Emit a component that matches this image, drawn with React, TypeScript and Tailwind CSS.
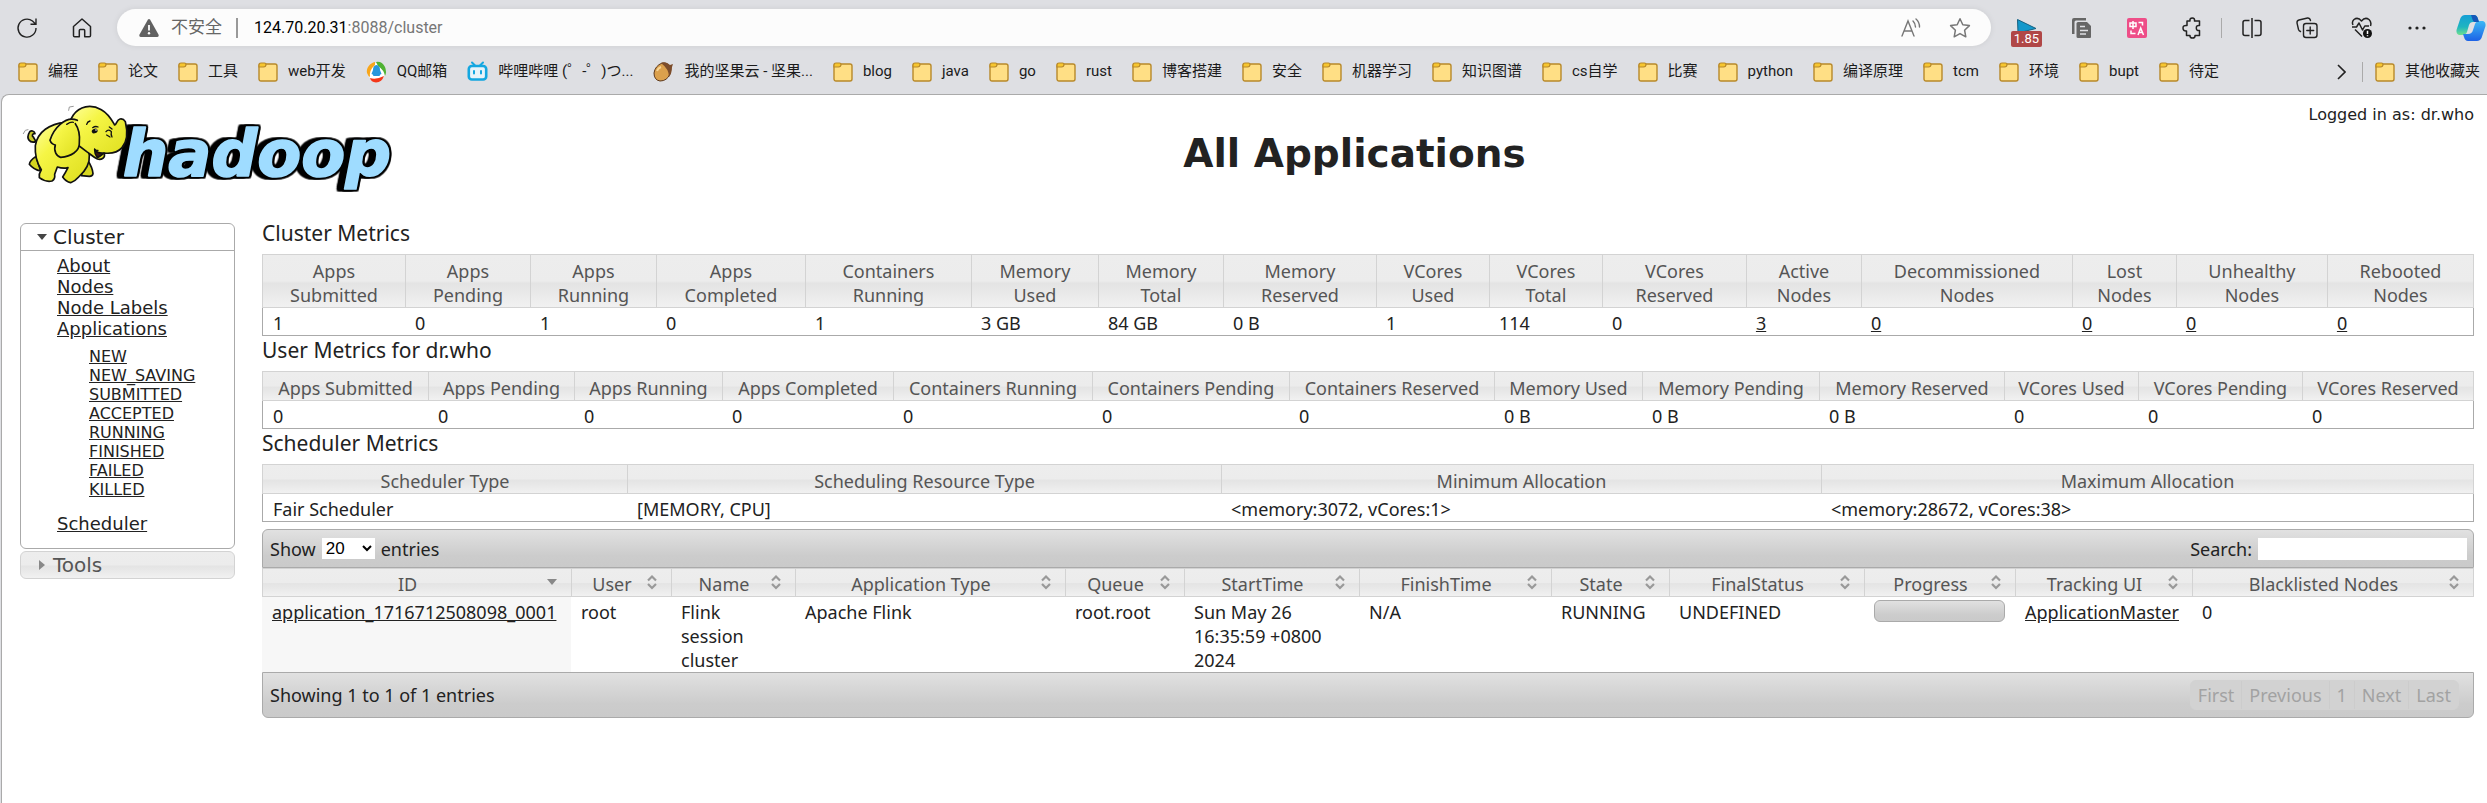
import React from "react";

const uiFont = "font-['Roboto','Noto_Sans_CJK_SC',sans-serif]";
const tableFont = "font-['Noto_Sans','Open_Sans','Noto_Sans_CJK_SC',sans-serif]";
const pageFont = "font-['DejaVu_Sans',sans-serif]";
const headerFill =
  "bg-[linear-gradient(to_bottom,#ededed_0%,#ececec_50%,#e4e4e4_54%,#e8e8e8_70%,#f1f1f1_100%)]";
const barFill = "bg-[linear-gradient(to_bottom,#e1e1e1_0%,#cccccc_70%,#cacaca_100%)]";

/* ---------- browser icons ---------- */

function FolderIcon() {
  return (
    <svg width="20" height="20" viewBox="0 0 20 20" className="shrink-0">
      <rect x="1" y="2" width="18" height="17" rx="2" fill="#ffdf85" stroke="#b8892a" strokeWidth="1.4" />
      <path d="M1 5V3Q1 1 3 1H6.500Q8 1 8 2.500Q8 5 5.500 5Z" fill="#f7c62f" stroke="#b8892a" strokeWidth="1.200" />
    </svg>
  );
}

function QQMailIcon() {
  return (
    <svg width="21" height="22" viewBox="0 0 21 22" className="shrink-0">
      <circle cx="10.500" cy="11" r="9" fill="#fff" />
      <path d="M9 1C4 2 0 7 1 12Q2 15 4 16Q3 9 9 4Z" fill="#f8a61b" />
      <path d="M10 1Q16 0 19 6Q21 11 19 15Q18 9 12 5Z" fill="#4fb233" />
      <path d="M4 17Q10 19 18 15Q16 21 10 21.500Q5 21 4 17Z" fill="#f4381a" />
      <path d="M10.500 4Q14 4.500 14 9L15.500 13Q14 13 13.500 15H7.500Q7 13 5.500 13L7 9Q7 4.500 10.500 4Z" fill="#2797dd" />
    </svg>
  );
}

function BilibiliIcon() {
  return (
    <svg width="21" height="21" viewBox="0 0 21 21" className="shrink-0" fill="none" stroke="#14a7e0">
      <path d="M5 1.500L8 4.500M16 1.500L13 4.500" strokeWidth="2" strokeLinecap="round" />
      <rect x="1.800" y="5" width="17.400" height="13.500" rx="3" strokeWidth="2.600" fill="#e8f4fa" />
      <path d="M7 10V12.500M14 10V12.500" strokeWidth="2" strokeLinecap="round" />
    </svg>
  );
}

function NutIcon() {
  return (
    <svg width="21" height="21" viewBox="0 0 21 21" className="shrink-0">
      <path d="M9 2Q2 5 1 12Q1 19 7 20Q14 20 17 13Q18 8 17 5Q13 1 9 2Z" fill="#dba04c" stroke="#5c381c" strokeWidth="1" />
      <path d="M8 2Q13 0 17 4L20 3L19 6Q19 12 16 16Q16 8 8 2Z" fill="#7c4c2a" />
      <path d="M4 10Q5 7 8 6" stroke="#f7d596" strokeWidth="2" fill="none" />
    </svg>
  );
}

function ReloadIcon() {
  return (
    <svg width="22" height="22" viewBox="0 0 22 22" fill="none" stroke="#222" strokeWidth="1.400">
      <path d="M20 11A9 9 0 1 1 16.500 4L19.500 7M20 1.500V7.200H14.500" />
    </svg>
  );
}

function HomeIcon() {
  return (
    <svg width="20" height="20" viewBox="0 0 20 20" fill="none" stroke="#222" strokeWidth="1.500" strokeLinejoin="round">
      <path d="M1.500 8.500L10 1L18.500 8.500V17.500Q18.500 18.800 17.300 18.800H12.700V12.500Q12.700 11.500 11.700 11.500H8.300Q7.300 11.500 7.300 12.500V18.800H2.700Q1.500 18.800 1.500 17.500Z" />
    </svg>
  );
}

function WarningIcon() {
  return (
    <svg width="20" height="18" viewBox="0 0 20 18">
      <path d="M8.800 .8Q10 -.6 11.200 .8L19.600 15.800Q20 18 18 18H2Q0 18 .4 15.800Z" fill="#616161" />
      <path d="M10 6V11.500" stroke="#fff" strokeWidth="1.800" />
      <circle cx="10" cy="14.300" r="1.200" fill="#fff" />
    </svg>
  );
}

function ReadAloudIcon() {
  return (
    <svg width="20" height="20" viewBox="0 0 20 20" fill="none" stroke="#777" strokeWidth="1.400" strokeLinecap="round">
      <path d="M1 18L7 3L13 18M3 13H11M12 3Q14.500 5.500 14.500 9M15 1Q18.500 4 18.500 9" />
    </svg>
  );
}

function StarIcon() {
  return (
    <svg width="22" height="22" viewBox="0 0 22 22" fill="none" stroke="#777" strokeWidth="1.500" strokeLinejoin="round">
      <path d="M11 1.800L13.800 7.800L20.400 8.600L15.600 13.200L16.800 19.800L11 16.600L5.200 19.800L6.400 13.200L1.600 8.600L8.200 7.800Z" />
    </svg>
  );
}

function FlagIcon() {
  return (
    <span className="relative block h-9 w-[31px]">
      <svg width="20" height="15" viewBox="0 0 20 15" className="absolute top-[9px] left-[6px]">
        <path d="M.5 .5L19 9.500L1 14Z" fill="#1398cb" stroke="#166080" />
      </svg>
      <span className="absolute top-[21px] left-0 flex h-4 w-[31px] items-center justify-center rounded-xs bg-[#b04747] text-[13px] leading-none text-white">
        1.85
      </span>
    </span>
  );
}

function DocsIcon() {
  return (
    <svg width="20" height="20" viewBox="0 0 20 20">
      <path d="M0 16V2Q0 0 2 0H14V2.500H4Q2.500 2.500 2.500 4V16Z" fill="#666" />
      <path d="M6 4H15L19 8V19Q19 20 18 20H6Q4.500 20 4.500 18.500V5.500Q4.500 4 6 4Z" fill="#666" />
      <path d="M8 8.500H13M8 12.500H16M8 16H14" stroke="#dedfe3" strokeWidth="1.500" />
    </svg>
  );
}

function TranslateIcon() {
  return (
    <svg width="20" height="20" viewBox="0 0 20 20" fill="none" stroke="#fff" strokeWidth="1.500">
      <rect width="20" height="20" rx="2" fill="#ee4e88" stroke="none" />
      <path d="M3 5H9V8.500H3ZM6 3V11M11.500 4.500H15.500V7.500M4 12.500V15.500H8.500M11 17L13.700 10L16.500 17M12 14.500H15.500" />
    </svg>
  );
}

function PuzzleIcon() {
  return (
    <svg width="20" height="22" viewBox="0 0 20 22" fill="none" stroke="#222" strokeWidth="1.500" strokeLinejoin="round">
      <path d="M5 4H8Q7.500 1 10.300 1Q13 1 12.500 4H17.500V8.500Q14.300 8 14.300 11Q14.300 14 17.500 13.500V18.500H13Q13.300 21 10.500 21Q7.800 21 8 18.500H4.500V14Q1 14.300 1 11Q1 8 5 8.500Z" />
    </svg>
  );
}

function SplitIcon() {
  return (
    <svg width="20" height="20" viewBox="0 0 20 20" fill="none" stroke="#222" strokeWidth="1.500">
      <path d="M7.500 2.500H3Q1 2.500 1 4.500V15.500Q1 17.500 3 17.500H7.500M12.500 2.500H17Q19 2.500 19 4.500V15.500Q19 17.500 17 17.500H12.500M10 0V20" />
    </svg>
  );
}

function CollectionsIcon() {
  return (
    <svg width="22" height="22" viewBox="0 0 22 22" fill="none" stroke="#222" strokeWidth="1.400" strokeLinecap="round">
      <rect x="7.500" y="6.500" width="13.500" height="14" rx="2.500" />
      <path d="M14.200 10V17M10.800 13.500H17.700M4.500 14.500Q3 14 2.500 12.500L1 6Q.8 3.500 3 3L11.500 1Q13.800 .8 14.500 3.500" />
    </svg>
  );
}

function HeartIcon() {
  return (
    <svg width="22" height="22" viewBox="0 0 22 22" fill="none" stroke="#222" strokeWidth="1.500" strokeLinejoin="round">
      <path d="M2 8Q.5 5 3 2.500Q7 -.3 10.500 4Q14 -.3 18 2.500Q20.800 5 19.500 9M1 10H5.500L8 6L11.500 13L13.800 9H18M4 12.500L11 19.500" />
      <circle cx="16.500" cy="16.500" r="4.500" fill="#111" stroke="none" />
      <path d="M16.500 13.800V17M16.500 18.300V19.300" stroke="#fff" />
    </svg>
  );
}

function DotsIcon() {
  return (
    <svg width="18" height="4" viewBox="0 0 18 4" fill="#222">
      <circle cx="2" cy="2" r="1.600" />
      <circle cx="9" cy="2" r="1.600" />
      <circle cx="16" cy="2" r="1.600" />
    </svg>
  );
}

function CopilotIcon() {
  return (
    <svg width="30" height="28" viewBox="0 0 30 28">
      <defs>
        <linearGradient id="cpA" x1="0" y1="0" x2="0" y2="1">
          <stop offset="0" stopColor="#159fd6" />
          <stop offset=".6" stopColor="#1fb5c0" />
          <stop offset="1" stopColor="#6fe08e" />
        </linearGradient>
        <linearGradient id="cpB" x1="0" y1="0" x2="0" y2="1">
          <stop offset="0" stopColor="#3bb8f5" />
          <stop offset="1" stopColor="#1d62e6" />
        </linearGradient>
      </defs>
      <path d="M9 1H18Q21 1 22 5L23 8H17Q14 8 13 11L11 18Q10 21 6 21H3Q0 20 .5 16L4.500 4Q6 1 9 1Z" fill="url(#cpA)" />
      <path d="M21 27H12Q9 27 8 23L7 20H12Q16 20 17 16L19 10Q20 7 24 7H27Q30 8 29.500 12L25.500 24Q24 27 21 27Z" fill="url(#cpB)" />
      <path d="M15 1H18Q21 1 22 5L23 8H19Q17 8 16 4Z" fill="#1557b8" />
    </svg>
  );
}

const bookmarks: { label: string; icon?: React.ReactNode }[] = [
  { label: "编程" },
  { label: "论文" },
  { label: "工具" },
  { label: "web开发" },
  { label: "QQ邮箱", icon: <QQMailIcon /> },
  { label: "哔哩哔哩 (゜-゜)つ...", icon: <BilibiliIcon /> },
  { label: "我的坚果云 - 坚果...", icon: <NutIcon /> },
  { label: "blog" },
  { label: "java" },
  { label: "go" },
  { label: "rust" },
  { label: "博客搭建" },
  { label: "安全" },
  { label: "机器学习" },
  { label: "知识图谱" },
  { label: "cs自学" },
  { label: "比赛" },
  { label: "python" },
  { label: "编译原理" },
  { label: "tcm" },
  { label: "环境" },
  { label: "bupt" },
  { label: "待定" },
];

function Bookmark({ label, icon }: { label: string; icon?: React.ReactNode }) {
  return (
    <a href="#" className="flex shrink-0 items-center gap-2.5 whitespace-nowrap">
      {icon ?? <FolderIcon />}
      <span>{label}</span>
    </a>
  );
}

function ToolButton({ label, children }: { label: string; children: React.ReactNode }) {
  return (
    <button aria-label={label} className="flex w-[55px] shrink-0 items-center justify-center">
      {children}
    </button>
  );
}

function BrowserChrome() {
  return (
    <div className={`bg-[#dedfe3] text-[15px] text-[#1b1b1b] ${uiFont}`}>
      <div className="flex h-[55px] items-center">
        <button aria-label="Reload" className="flex w-[54px] shrink-0 justify-center">
          <ReloadIcon />
        </button>
        <button aria-label="Home" className="flex w-[55px] shrink-0 justify-center">
          <HomeIcon />
        </button>
        <div className="ml-2 flex h-[37px] min-w-0 flex-1 items-center rounded-full bg-[#fcfcfc] pr-5 pl-[22px] shadow-[0_0_6px_rgba(0,0,0,0.08)]">
          <WarningIcon />
          <span className="ml-3 text-[17px] text-[#666]">不安全</span>
          <span className="ml-3.5 h-5 w-0.5 bg-[#999]" />
          <span className="ml-4 flex-1 text-base text-[#767676]">
            <span className="text-black">124.70.20.31</span>:8088/cluster
          </span>
          <button aria-label="Read aloud" className="mr-7">
            <ReadAloudIcon />
          </button>
          <button aria-label="Add to favorites">
            <StarIcon />
          </button>
        </div>
        <div className="ml-2 flex shrink-0 items-center">
          <ToolButton label="Speed"><FlagIcon /></ToolButton>
          <ToolButton label="Documents"><DocsIcon /></ToolButton>
          <ToolButton label="Translate"><TranslateIcon /></ToolButton>
          <ToolButton label="Extensions"><PuzzleIcon /></ToolButton>
          <span className="mx-0.5 h-5 w-px bg-[#aaa]" />
          <ToolButton label="Split screen"><SplitIcon /></ToolButton>
          <ToolButton label="Collections"><CollectionsIcon /></ToolButton>
          <ToolButton label="Browser essentials"><HeartIcon /></ToolButton>
          <ToolButton label="More"><DotsIcon /></ToolButton>
          <button aria-label="Copilot" className="-mr-px w-[44px] shrink-0 pl-3">
            <CopilotIcon />
          </button>
        </div>
      </div>
      <div className="flex h-[39px] items-center pb-1.5 pl-[18px]">
        <nav className="flex min-w-0 flex-1 items-center gap-5 overflow-hidden">
          {bookmarks.map((b) => (
            <Bookmark key={b.label} {...b} />
          ))}
        </nav>
        <button aria-label="More bookmarks" className="mr-4 shrink-0">
          <svg width="9" height="16" viewBox="0 0 9 16" fill="none" stroke="#222" strokeWidth="1.600">
            <path d="M1 1L8 8L1 15" />
          </svg>
        </button>
        <span className="mr-3 h-5 w-px shrink-0 bg-[#aaa]" />
        <div className="shrink-0 pr-[7px]">
          <Bookmark label="其他收藏夹" />
        </div>
      </div>
    </div>
  );
}

/* ---------- page header ---------- */

function HadoopLogo() {
  return (
    <svg width="377" height="93" viewBox="60 40 1131 279" className="max-w-none" role="img" aria-label="hadoop">
      <defs>
        <linearGradient id="skin" x1="0" y1="0" x2="1" y2="1">
          <stop offset="0" stopColor="#ffffa0" />
          <stop offset=".35" stopColor="#f5f545" />
          <stop offset="1" stopColor="#dddd1c" />
        </linearGradient>
      </defs>
      <text
        x="368"
        y="259"
        fontSize="192"
        fontWeight="700"
        fontStyle="italic"
        fill="#9fdcff"
        stroke="#9fdcff"
        strokeWidth="5"
        strokeLinejoin="round"
        className={`${pageFont} [filter:drop-shadow(5px_0_0_#000)_drop-shadow(-5px_0_0_#000)_drop-shadow(0_5px_0_#000)_drop-shadow(0_-5px_0_#000)_drop-shadow(-16px_0_0_#000)]`}
      >
        hadoop
      </text>
      <g stroke="#111" strokeWidth="5" strokeLinejoin="round" strokeLinecap="round" fill="url(#skin)">
        <path d="M108 156C88 162 78 146 88 128C92 120 104 124 105 132C98 130 94 138 100 142Z" fill="#c9c92a" />
        <path d="M108 200C96 208 88 218 88 224C96 234 108 242 122 244Z" fill="#d6d620" />
        <path d="M262 210C270 222 278 236 279 252Q278 260 268 260L244 258Q250 240 252 222Z" fill="#d6d620" />
        <path d="M196 98C150 102 112 126 106 168C104 200 112 222 124 240Q116 252 118 264Q136 278 156 274Q166 268 164 254L172 232Q190 238 204 234Q196 250 188 262Q198 276 212 279Q226 274 236 262C256 244 270 222 268 196L250 130Z" />
        <path d="M220 76C238 50 272 42 304 60C326 72 336 92 344 106C350 104 350 90 360 88Q370 86 376 96C384 130 380 158 366 174C352 190 330 192 312 190C318 204 304 212 292 208C282 204 272 194 260 186L226 160L206 100Z" />
        <path d="M284 180Q292 192 312 190Q300 200 292 204Q284 194 284 180Z" fill="#3a1712" />
        <path d="M232 92C196 76 160 118 150 152Q154 164 166 166C160 184 170 200 182 203C212 200 240 186 238 158C240 134 236 116 226 102" />
      </g>
      <g fill="none" stroke="#111" strokeWidth="4" strokeLinecap="round">
        <path d="M260 104Q262 96 270 94M278 114Q286 108 294 112M318 126Q324 118 332 124M320 136L330 142M334 126Q332 136 336 142M328 112L336 118M284 178Q286 184 294 182M200 104Q212 96 220 98" />
        <path d="M206 62L208 52L220 50M70 132L76 122L84 120" stroke="#999" strokeWidth="3" />
      </g>
      <ellipse cx="284" cy="124" rx="9" ry="7" fill="#111" transform="rotate(-25 284 124)" />
      <circle cx="288" cy="121" r="2.500" fill="#fff" />
    </svg>
  );
}

/* ---------- sidebar ---------- */

const appStates = ["NEW", "NEW_SAVING", "SUBMITTED", "ACCEPTED", "RUNNING", "FINISHED", "FAILED", "KILLED"];

function Sidebar() {
  return (
    <aside className="w-[215px] shrink-0">
      <div className="rounded-md border border-[#aaa] bg-white pb-3.5">
        <button className="flex h-[27px] w-full items-center border-b border-[#aaa] pl-4 text-xl leading-none text-[#212121]">
          <svg width="10" height="6" viewBox="0 0 10 6" className="mr-[6px]">
            <path d="M0 0H10L5 6Z" fill="#454545" />
          </svg>
          Cluster
        </button>
        <ul className="pt-1 pl-9 text-lg leading-[21px] text-[#222]">
          {["About", "Nodes", "Node Labels", "Applications"].map((t) => (
            <li key={t}>
              <a href="#" className="underline">{t}</a>
            </li>
          ))}
          <li>
            <ul className="py-2 pl-8 text-base leading-[19px]">
              {appStates.map((t) => (
                <li key={t}>
                  <a href="#" className="underline">{t}</a>
                </li>
              ))}
            </ul>
          </li>
          <li className="pt-1.5">
            <a href="#" className="underline">Scheduler</a>
          </li>
        </ul>
      </div>
      <button
        className={`mt-0.5 flex h-7 w-full items-center rounded-md border border-[#d3d3d3] pl-[18px] text-xl leading-none text-[#555] ${headerFill}`}
      >
        <svg width="6" height="10" viewBox="0 0 6 10" className="mr-2">
          <path d="M0 0V10L6 5Z" fill="#888" />
        </svg>
        Tools
      </button>
    </aside>
  );
}

/* ---------- tables ---------- */

type Column = { head: string; width: number; value: React.ReactNode };

function link(text: string) {
  return <a href="#" className="underline">{text}</a>;
}

const clusterMetrics: Column[] = [
  { head: "Apps Submitted", width: 143, value: "1" },
  { head: "Apps Pending", width: 125, value: "0" },
  { head: "Apps Running", width: 126, value: "1" },
  { head: "Apps Completed", width: 149, value: "0" },
  { head: "Containers Running", width: 166, value: "1" },
  { head: "Memory Used", width: 127, value: "3 GB" },
  { head: "Memory Total", width: 125, value: "84 GB" },
  { head: "Memory Reserved", width: 153, value: "0 B" },
  { head: "VCores Used", width: 113, value: "1" },
  { head: "VCores Total", width: 113, value: "114" },
  { head: "VCores Reserved", width: 144, value: "0" },
  { head: "Active Nodes", width: 115, value: link("3") },
  { head: "Decommissioned Nodes", width: 211, value: link("0") },
  { head: "Lost Nodes", width: 104, value: link("0") },
  { head: "Unhealthy Nodes", width: 151, value: link("0") },
  { head: "Rebooted Nodes", width: 147, value: link("0") },
];

const userMetrics: Column[] = [
  { head: "Apps Submitted", width: 166, value: "0" },
  { head: "Apps Pending", width: 146, value: "0" },
  { head: "Apps Running", width: 148, value: "0" },
  { head: "Apps Completed", width: 171, value: "0" },
  { head: "Containers Running", width: 199, value: "0" },
  { head: "Containers Pending", width: 197, value: "0" },
  { head: "Containers Reserved", width: 205, value: "0" },
  { head: "Memory Used", width: 148, value: "0 B" },
  { head: "Memory Pending", width: 177, value: "0 B" },
  { head: "Memory Reserved", width: 185, value: "0 B" },
  { head: "VCores Used", width: 134, value: "0" },
  { head: "VCores Pending", width: 164, value: "0" },
  { head: "VCores Reserved", width: 172, value: "0" },
];

const schedulerMetrics: Column[] = [
  { head: "Scheduler Type", width: 365, value: "Fair Scheduler" },
  { head: "Scheduling Resource Type", width: 594, value: "[MEMORY, CPU]" },
  { head: "Minimum Allocation", width: 600, value: "<memory:3072, vCores:1>" },
  { head: "Maximum Allocation", width: 653, value: "<memory:28672, vCores:38>" },
];

const applications: Column[] = [
  { head: "ID", width: 309, value: link("application_1716712508098_0001") },
  { head: "User", width: 100, value: "root" },
  { head: "Name", width: 124, value: "Flink session cluster" },
  { head: "Application Type", width: 270, value: "Apache Flink" },
  { head: "Queue", width: 119, value: "root.root" },
  { head: "StartTime", width: 175, value: "Sun May 26 16:35:59 +0800 2024" },
  { head: "FinishTime", width: 192, value: "N/A" },
  { head: "State", width: 118, value: "RUNNING" },
  { head: "FinalStatus", width: 195, value: "UNDEFINED" },
  {
    head: "Progress",
    width: 151,
    value: <div className={`h-[22px] rounded-md border border-[#aaa] ${barFill}`} />,
  },
  { head: "Tracking UI", width: 177, value: link("ApplicationMaster") },
  { head: "Blacklisted Nodes", width: 282, value: "0" },
];

function Cols({ columns }: { columns: Column[] }) {
  const total = columns.reduce((sum, c) => sum + c.width, 0);
  return (
    <colgroup>
      {columns.map((c) => (
        <col key={c.head} style={{ width: `${(c.width / total) * 100}%` }} />
      ))}
    </colgroup>
  );
}

function MetricsTable({ title, columns, stacked }: { title: string; columns: Column[]; stacked?: boolean }) {
  return (
    <section>
      <h2 className="pb-1.5 text-[21px] leading-[29px]">{title}</h2>
      <table className="w-full table-fixed border-separate border-spacing-0 text-lg leading-6">
        <Cols columns={columns} />
        <thead>
          <tr>
            {columns.map((c) => (
              <th
                key={c.head}
                className={`border-y border-l border-[#d3d3d3] px-2 pt-1 font-normal text-[#555] last:border-r ${stacked ? "" : "whitespace-nowrap"} ${headerFill}`}
              >
                {stacked
                  ? c.head.split(" ").map((w) => <span key={w} className="block">{w}</span>)
                  : <span className="flex justify-center">{c.head}</span>}
              </th>
            ))}
          </tr>
        </thead>
        <tbody>
          <tr>
            {columns.map((c) => (
              <td
                key={c.head}
                className="border-b border-[#aaa] px-2.5 pt-[3px] whitespace-nowrap first:border-l last:border-r"
              >
                {c.value}
              </td>
            ))}
          </tr>
        </tbody>
      </table>
    </section>
  );
}

function SortIcon({ active }: { active: boolean }) {
  return (
    <svg width="16" height="16" viewBox="0 0 16 16" className="mt-0.5 shrink-0">
      {active ? (
        <path d="M3 5H13L8 11Z" fill="#888" />
      ) : (
        <path d="M4 6.500L8 2.500L12 6.500M4 10L8 14L12 10" fill="none" stroke="#999" strokeWidth="2.200" />
      )}
    </svg>
  );
}

function ApplicationsTable() {
  return (
    <section className="pt-[7px]">
      <div className={`flex h-[39px] items-center justify-between rounded-t-md border border-[#aaa] pr-1.5 pl-[7px] text-lg ${barFill}`}>
        <label className="flex items-center gap-1.5">
          Show
          <select
            defaultValue="20"
            className="h-[21px] w-[53px] bg-white font-['Liberation_Sans',sans-serif] text-[17px] leading-none text-black"
          >
            <option>20</option>
            <option>40</option>
            <option>60</option>
          </select>
          entries
        </label>
        <label className="flex items-center gap-1.5">
          Search:
          <input type="text" className="h-[22px] w-[209px] bg-white px-1 text-base outline-none" />
        </label>
      </div>
      <table className="w-full table-fixed border-separate border-spacing-0 text-lg leading-6">
        <Cols columns={applications} />
        <thead>
          <tr>
            {applications.map((c, i) => (
              <th
                key={c.head}
                className={`border-y border-l border-[#d3d3d3] pt-[3px] pr-[11px] pl-2 font-normal text-[#555] last:border-r ${headerFill}`}
              >
                <span className="flex whitespace-nowrap">
                  <span className="flex flex-1 justify-center">{c.head}</span>
                  <SortIcon active={i === 0} />
                </span>
              </th>
            ))}
          </tr>
        </thead>
        <tbody>
          <tr>
            {applications.map((c) => (
              <td key={c.head} className="px-2.5 pt-[3px] align-top first:bg-[#f7f7f7]">
                {c.value}
              </td>
            ))}
          </tr>
        </tbody>
      </table>
      <div className={`flex h-[46px] items-center justify-between rounded-b-md border border-[#aaa] pr-3.5 pl-[7px] text-lg ${barFill}`}>
        <span>Showing 1 to 1 of 1 entries</span>
        <div className="flex h-[30px] overflow-hidden rounded-md border border-[#d2d2d2] bg-[#d2d2d2] text-[#a2a2a2]">
          {["First", "Previous", "1", "Next", "Last"].map((t) => (
            <button key={t} disabled className="border-r border-[#cccccc] px-[7px] leading-none last:border-r-0">
              {t}
            </button>
          ))}
        </div>
      </div>
    </section>
  );
}

export default function App() {
  return (
    <div className="flex min-h-screen flex-col overflow-x-clip bg-[#dedfe3]">
      <BrowserChrome />
      <div className={`ml-px flex-1 rounded-tl-lg border-t border-l border-[#aaa] bg-white text-[#222] ${pageFont}`}>
        <header className="flex pt-2 pr-[13px] pl-[18px]">
          <div className="w-[215px] shrink-0">
            <HadoopLogo />
          </div>
          <div className="flex-1">
            <p className="text-right text-base leading-6">Logged in as: dr.who</p>
            <h1 className="pt-[3px] text-center text-[39px] leading-[48px] font-bold">All Applications</h1>
          </div>
        </header>
        <div className="flex gap-[27px] pt-[27px] pr-[13px] pb-8 pl-[18px]">
          <Sidebar />
          <main className={`-mt-1 min-w-0 flex-1 ${tableFont}`}>
            <MetricsTable title="Cluster Metrics" columns={clusterMetrics} stacked />
            <MetricsTable title="User Metrics for dr.who" columns={userMetrics} />
            <MetricsTable title="Scheduler Metrics" columns={schedulerMetrics} />
            <ApplicationsTable />
          </main>
        </div>
      </div>
    </div>
  );
}
